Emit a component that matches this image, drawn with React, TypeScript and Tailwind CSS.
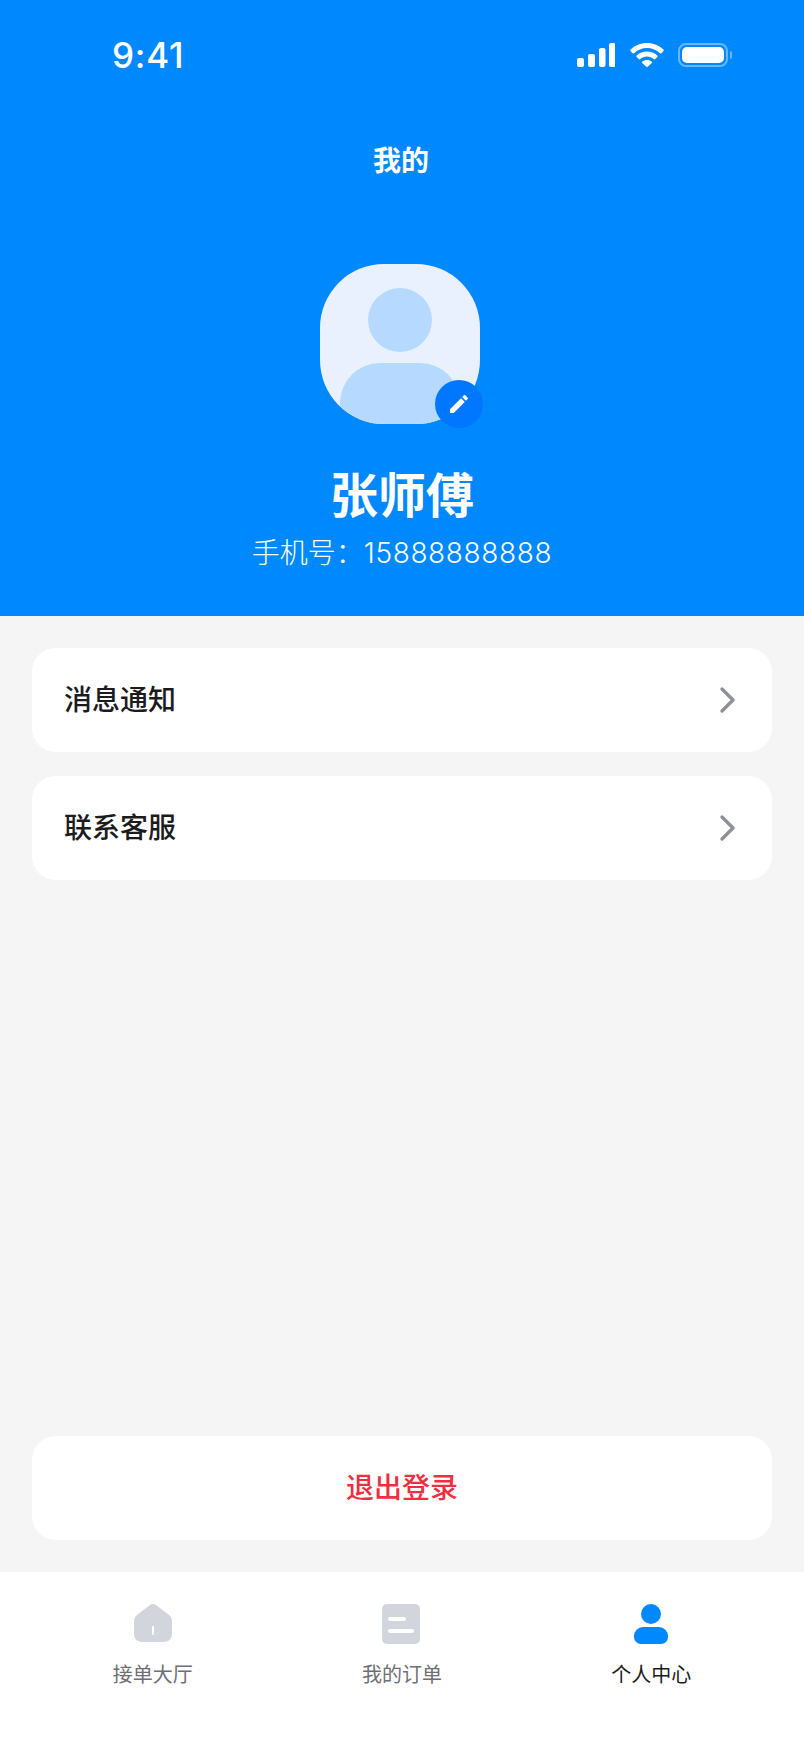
const cjk = "font-['Inter','Noto_Sans_CJK_SC',sans-serif]";

function StatusIcons() {
  return (
    <div className="flex items-center">
      <svg width="38" height="24" viewBox="0 0 38 24" className="fill-white">
        <rect x="0" y="15" width="7" height="9" rx="2" />
        <rect x="11" y="11" width="7" height="13" rx="2" />
        <rect x="22" y="5" width="6.5" height="19" rx="2" />
        <rect x="32" y="0" width="6.5" height="24" rx="2" />
      </svg>
      <svg width="34" height="24" viewBox="0 0 34 24" className="ml-[15px] fill-white">
        <path d="M17 0c6.4 0 12.2 2.500 16.500 6.600.4.4.4 1 0 1.400l-2.100 2.200c-.4.4-1 .4-1.400 0C26.600 7 22 5 17 5S7.400 7 4 10.200c-.4.4-1 .4-1.400 0L.5 8C.1 7.600.1 7 .5 6.600 4.800 2.500 10.600 0 17 0z" />
        <path d="M17 8.500c4 0 7.600 1.500 10.400 4 .4.400.4 1 0 1.400l-2.200 2.200c-.4.4-1 .4-1.400 0-1.800-1.500-4.200-2.500-6.800-2.500s-5 1-6.800 2.500c-.4.4-1 .4-1.400 0l-2.200-2.200c-.4-.4-.4-1 0-1.400 2.800-2.500 6.400-4 10.400-4z" />
        <path d="M17 17c1.900 0 3.500.6 4.800 1.700.4.400.4 1 0 1.400l-4.100 3.600c-.4.4-1 .4-1.400 0l-4.100-3.600c-.4-.4-.4-1 0-1.400C13.500 17.600 15.100 17 17 17z" />
      </svg>
      <div className="ml-[14px] flex items-center">
        <div className="h-[24px] w-[50px] rounded-[8px] border-2 border-white/40 p-[2px]">
          <div className="h-full w-full rounded-[5px] bg-white" />
        </div>
        <div className="ml-[2px] h-[8px] w-[2px] rounded-r-full bg-white/40" />
      </div>
    </div>
  );
}

function Chevron() {
  return (
    <svg width="18" height="26" viewBox="0 0 18 26" fill="none" className="stroke-[#8e8e99]">
      <path d="M3 2l11 11-11 11" strokeWidth="3.200" strokeLinecap="round" strokeLinejoin="round" />
    </svg>
  );
}

function MenuCard({ label }: { label: string }) {
  return (
    <div className="flex h-[104px] items-center justify-between rounded-[24px] bg-white pl-[32px] pr-[35px]">
      <span className="text-[28px] font-medium text-[#1c1c1e]">{label}</span>
      <Chevron />
    </div>
  );
}

function HomeIcon() {
  return (
    <svg width="38" height="40" viewBox="0 0 38 40">
      <path d="M15.800 1.200c1.900-1.500 4.500-1.500 6.400 0l12.300 9.400C36.700 12.300 38 14.800 38 17.500V30c0 4.400-3.600 8-8 8H8c-4.400 0-8-3.600-8-8V17.500c0-2.700 1.300-5.200 3.500-6.900z" fill="#d2d5dc" />
      <rect x="18" y="22" width="2" height="9" rx="1" fill="#fff" />
    </svg>
  );
}

function OrderIcon() {
  return (
    <div className="mr-[2px] flex h-[40px] w-[38px] flex-col items-start gap-[8px] rounded-[5px] bg-[#d2d5dc] pl-[6px] pt-[13px]">
      <div className="h-[4px] w-[18px] rounded-full bg-white" />
      <div className="h-[4px] w-[26px] rounded-full bg-white" />
    </div>
  );
}

function PersonIcon() {
  return (
    <div className="flex flex-col items-center">
      <div className="h-[20px] w-[20px] rounded-full bg-[#0088ff]" />
      <div className="mt-[3px] h-[17px] w-[34px] rounded-t-[9px] rounded-b-[7px] bg-[#0088ff]" />
    </div>
  );
}

export default function App() {
  return (
    <div className={`flex h-[1748px] w-full flex-col bg-[#f5f5f5] ${cjk}`}>
      <header className="h-[616px] bg-[#0088ff] pt-[43px] text-white">
        <div className="flex h-[24px] items-center justify-between pl-[112px] pr-[72px]">
          <span className="text-[35px] font-medium leading-[24px] tracking-[0.8px]">9:41</span>
          <StatusIcons />
        </div>
        <div className="flex flex-col items-center pt-[74px]">
          <h1 className="mr-[2px] text-[28px] font-semibold leading-[40px]">我的</h1>
          <div className="relative mr-[4px] mt-[83px] h-[160px] w-[160px]">
            <div className="flex h-full w-full flex-col items-center overflow-hidden rounded-[64px] bg-[#e9f1fe] pt-[24px]">
              <div className="h-[64px] w-[64px] shrink-0 rounded-full bg-[#b6daff]" />
              <div className="mt-[11px] h-[80px] w-[120px] shrink-0 rounded-[40px] bg-[#b6daff]" />
            </div>
            <div className="absolute left-[115px] top-[116px] flex h-[48px] w-[48px] items-center justify-center rounded-full bg-[#0077ff]">
              <svg width="24" height="24" viewBox="0 0 24 24" className="fill-white">
                <path d="M3 17.250V21h3.750L17.810 9.940l-3.750-3.750L3 17.250zM20.710 7.040c.39-.39.39-1.020 0-1.410l-2.340-2.340a.996.996 0 0 0-1.410 0l-1.830 1.830 3.750 3.750 1.830-1.830z" />
              </svg>
            </div>
          </div>
          <div className="mt-[36px] text-[48px] font-semibold leading-[72px]">张师傅</div>
          <div className="mt-px text-[28px] font-light leading-[40px]">
            手机号：<span className="tracking-[0.6px]">15888888888</span>
          </div>
        </div>
      </header>
      <main className="flex flex-1 flex-col justify-between p-[32px]">
        <div className="flex flex-col gap-[24px]">
          <MenuCard label="消息通知" />
          <MenuCard label="联系客服" />
        </div>
        <button className="h-[104px] rounded-[24px] bg-white text-[28px] font-medium text-[#ee2f42]">退出登录</button>
      </main>
      <nav className="grid h-[176px] grid-cols-3 bg-white px-[28px] pt-[32px] text-[20px]">
        <div className="flex flex-col items-center text-[#6e6e76]">
          <div className="flex h-[40px] items-start"><HomeIcon /></div>
          <span className="mt-[16px] leading-[30px]">接单大厅</span>
        </div>
        <div className="flex flex-col items-center text-[#6e6e76]">
          <div className="flex h-[40px] items-start"><OrderIcon /></div>
          <span className="mt-[16px] leading-[30px]">我的订单</span>
        </div>
        <div className="flex flex-col items-center text-[#1c1c1e]">
          <div className="flex h-[40px] items-start"><PersonIcon /></div>
          <span className="mt-[16px] leading-[30px]">个人中心</span>
        </div>
      </nav>
    </div>
  );
}
